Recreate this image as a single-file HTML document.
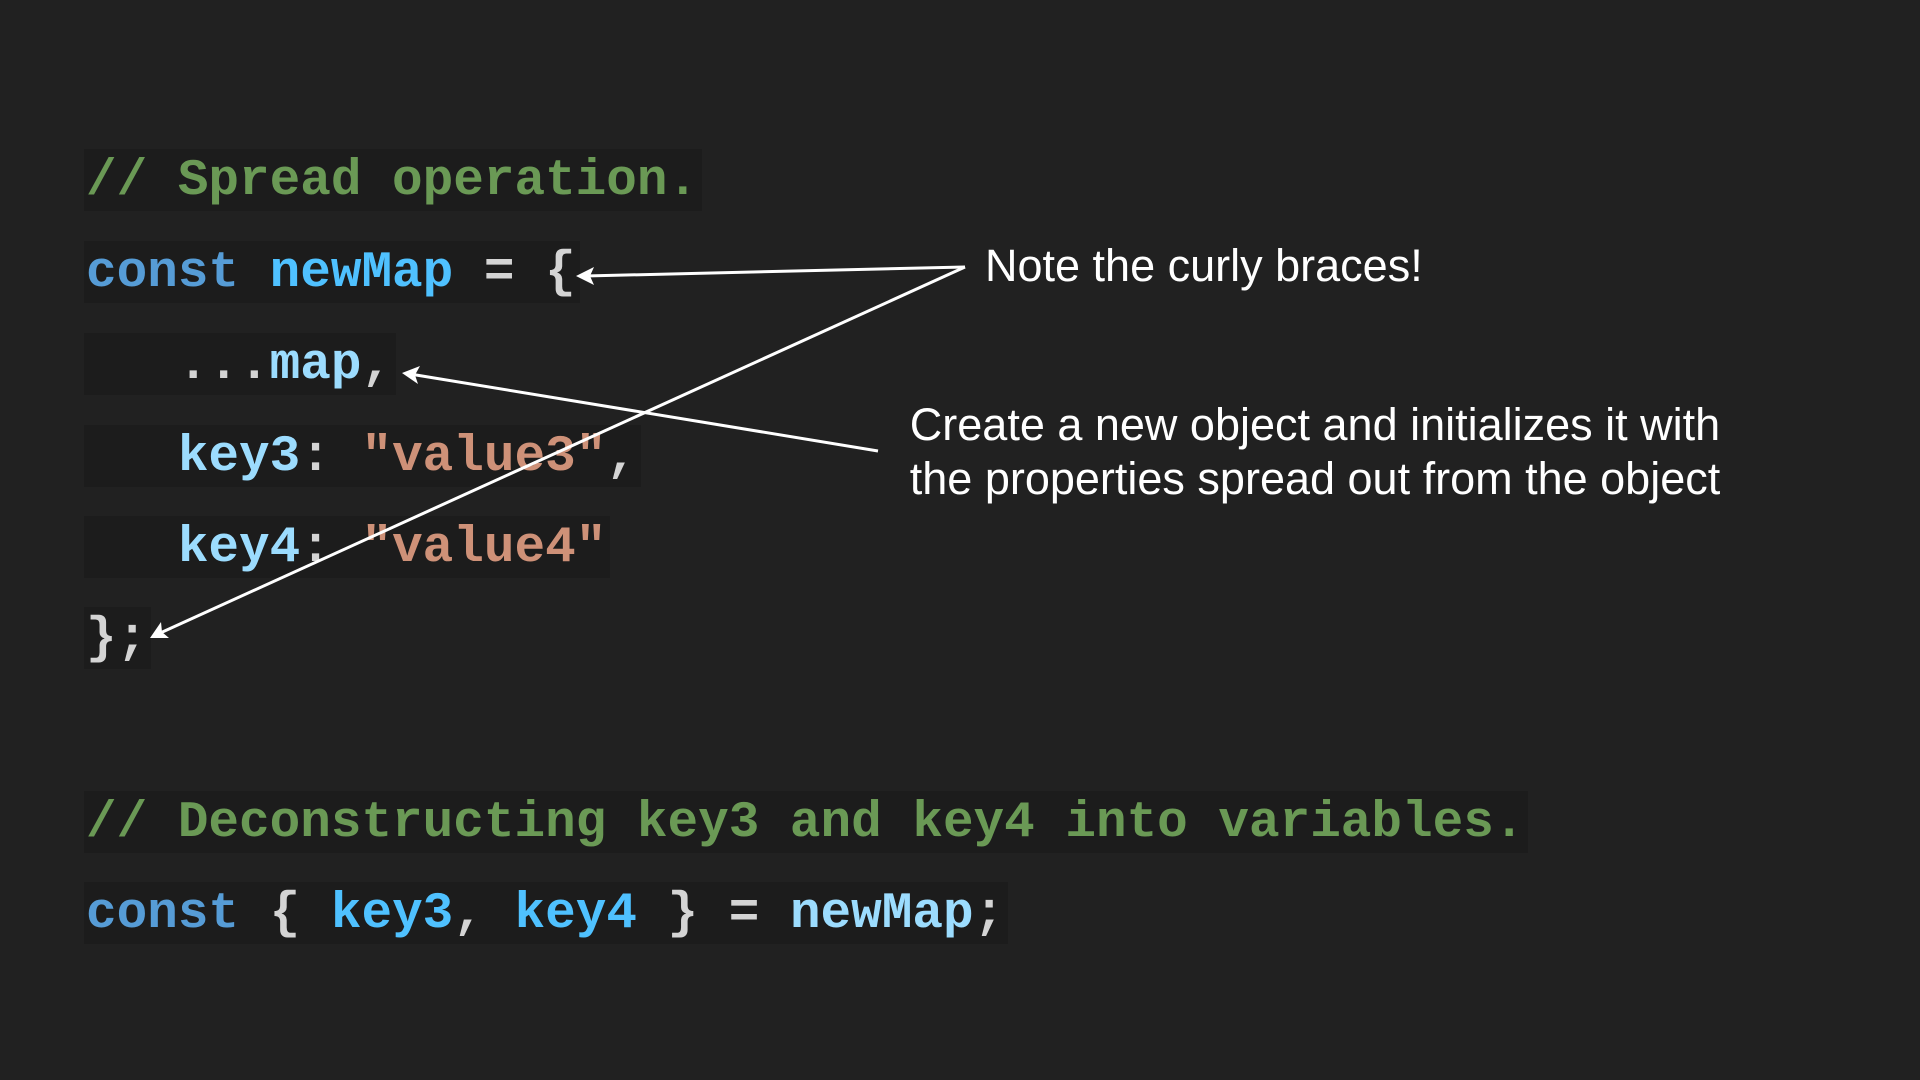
<!DOCTYPE html>
<html><head><meta charset="utf-8"><style>
html,body{margin:0;padding:0;background:#212121;width:1920px;height:1080px;overflow:hidden;position:relative}
.l{position:absolute;left:84px;height:58px;line-height:58px;font-family:"Liberation Mono","Courier New",monospace;font-weight:bold;font-size:51px;white-space:pre;background:#1c1c1c;padding:4px 4px 0 2px;color:#d4d4d4}
.c{color:#6a9955}.k{color:#569cd6}.v{color:#4fc1ff}.p{color:#9cdcfe}.s{color:#ce9178}.g{color:#d4d4d4}
.t{position:absolute;font-family:"Liberation Sans",sans-serif;color:#fff;font-size:45px;white-space:nowrap}
</style></head><body>
<div class="l" style="top:149px"><span class="c">// Spread operation.</span></div>
<div class="l" style="top:241px"><span class="k">const</span> <span class="v">newMap</span> = {</div>
<div class="l" style="top:333px">   ...<span class="p">map</span>,</div>
<div class="l" style="top:425px">   <span class="p">key3</span>: <span class="s">"value3"</span>,</div>
<div class="l" style="top:516px">   <span class="p">key4</span>: <span class="s">"value4"</span></div>
<div class="l" style="top:607px">};</div>
<div class="l" style="top:791px"><span class="c">// Deconstructing key3 and key4 into variables.</span></div>
<div class="l" style="top:882px"><span class="k">const</span> { <span class="v">key3</span>, <span class="v">key4</span> } = <span class="p">newMap</span>;</div>
<div class="t" style="left:985px;top:240px">Note the curly braces!</div>
<div class="t" style="left:902px;top:398px;width:826px;text-align:center;line-height:54px">Create a new object and initializes it with<br>the properties spread out from the object</div>
<svg width="1920" height="1080" style="position:absolute;left:0;top:0">
<g stroke="#fff" stroke-width="3" fill="none">
<line x1="965" y1="267" x2="585" y2="276"/>
<line x1="965" y1="267" x2="158" y2="634"/>
<line x1="878" y1="451" x2="410" y2="374"/>
</g>
<g fill="#fff">
<path d="M576,276 L594,267 L590,276 L594,285 Z"/>
<path d="M150,638 L161,622 L162,632 L169,638 Z"/>
<path d="M402,373 L420,366 L415,375 L418,384 Z"/>
</g>
</svg>
</body></html>
